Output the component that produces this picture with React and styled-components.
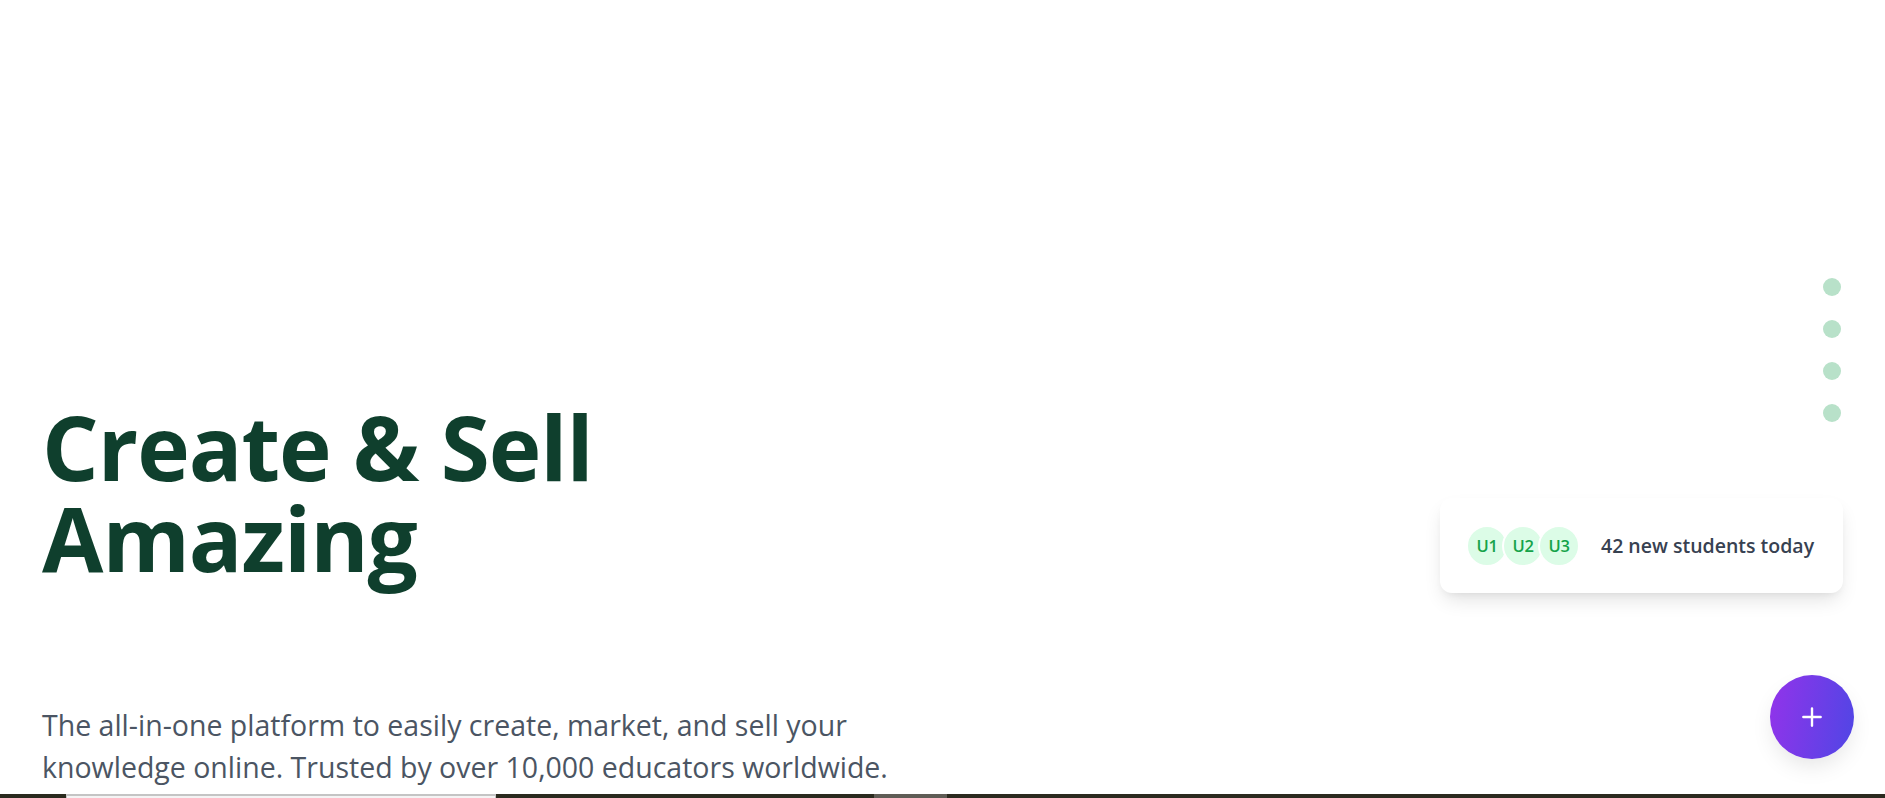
import React from "react";
import styled, { createGlobalStyle } from "styled-components";

const Global = createGlobalStyle`
  html, body { margin: 0; padding: 0; background: #ffffff; }
  body { overflow: hidden; font-family: "Open Sans", "Noto Sans", sans-serif; }
  * { box-sizing: border-box; }
`;

const Page = styled.div`
  position: relative;
  width: 100%;
  height: 798px;
  overflow: hidden;
  background: #ffffff;
  display: flex;
  flex-direction: column;
`;

const Hero = styled.section`
  flex: 1;
  padding: 401px 0 0 42px;
  display: flex;
  flex-direction: column;
`;

const Title = styled.h1`
  margin: 0;
  font-family: "Open Sans", "Noto Sans", sans-serif;
  font-weight: 700;
  font-size: 89px;
  line-height: 91px;
  letter-spacing: -1px;
  color: #0f3f2d;
`;

const Lead = styled.p`
  margin: 121px 0 0;
  max-width: 880px;
  font-family: "Open Sans", "Noto Sans", sans-serif;
  font-size: 28.5px;
  line-height: 42px;
  color: #4b5563;
`;

const Strip = styled.div`
  height: 4px;
  display: flex;
  flex-shrink: 0;
  background: #2a2a1e;
`;

const Segment = styled.div`
  width: ${(p) => p.w}px;
  flex-shrink: 0;
  background: ${(p) => p.bg};
  ${(p) => p.framed && "border: 1px solid #c4c4c4; border-bottom: none; border-top-width: 2px; background: #f4f4f4;"}
`;

const Dots = styled.div`
  position: absolute;
  top: 278px;
  right: 44px;
  display: flex;
  flex-direction: column;
  gap: 24px;
`;

const Dot = styled.span`
  width: 18px;
  height: 18px;
  border-radius: 50%;
  background: #b8e1c9;
`;

const StatCard = styled.div`
  position: absolute;
  top: 498px;
  right: 42px;
  width: 403px;
  height: 95px;
  padding: 0 26px;
  display: flex;
  align-items: center;
  gap: 21px;
  background: #ffffff;
  border-radius: 12px;
  box-shadow: 0 10px 20px -4px rgba(0, 0, 0, 0.12), 0 4px 8px -4px rgba(0, 0, 0, 0.08);
`;

const Avatars = styled.div`
  display: flex;
`;

const Avatar = styled.span`
  width: 42px;
  height: 42px;
  margin-left: ${(p) => (p.first ? 0 : -6)}px;
  border-radius: 50%;
  border: 2px solid #ffffff;
  background: #dcfce7;
  color: #16a34a;
  display: flex;
  align-items: center;
  justify-content: center;
  font-family: "Open Sans", "Noto Sans", sans-serif;
  font-weight: 600;
  font-size: 16.5px;
  letter-spacing: -0.3px;
`;

const StatText = styled.span`
  font-family: "Open Sans", "Noto Sans", sans-serif;
  font-weight: 600;
  font-size: 19.5px;
  color: #374151;
  white-space: nowrap;
`;

const Fab = styled.button`
  position: absolute;
  right: 31px;
  bottom: 39px;
  width: 84px;
  height: 84px;
  border: none;
  border-radius: 50%;
  padding: 0;
  background: linear-gradient(100deg, #9333ea 0%, #4f46e5 100%);
  box-shadow: 0 10px 25px -5px rgba(0, 0, 0, 0.12);
  display: flex;
  align-items: center;
  justify-content: center;
  cursor: pointer;
`;

export default function App() {
  return (
    <>
      <Global />
      <Page>
        <Hero>
          <Title>
            Create &amp; Sell
            <br />
            Amazing
          </Title>
          <Lead>
            The all-in-one platform to easily create, market, and sell your knowledge online. Trusted by over 10,000
            educators worldwide.
          </Lead>
        </Hero>
        <Strip>
          <Segment w={66} bg="#2a2a1e" />
          <Segment w={430} framed />
          <Segment w={378} bg="#2a2a1e" />
          <Segment w={73} bg="#5f5c55" />
          <Segment w={938} bg="#2b2a1f" />
        </Strip>
        <Dots>
          <Dot />
          <Dot />
          <Dot />
          <Dot />
        </Dots>
        <StatCard>
          <Avatars>
            <Avatar first>U1</Avatar>
            <Avatar>U2</Avatar>
            <Avatar>U3</Avatar>
          </Avatars>
          <StatText>42 new students today</StatText>
        </StatCard>
        <Fab aria-label="Add">
          <svg width="26" height="26" viewBox="0 0 24 24" fill="none" stroke="#ffffff" strokeWidth="2.2" strokeLinecap="round">
            <path d="M12 4v16M4 12h16" />
          </svg>
        </Fab>
      </Page>
    </>
  );
}
